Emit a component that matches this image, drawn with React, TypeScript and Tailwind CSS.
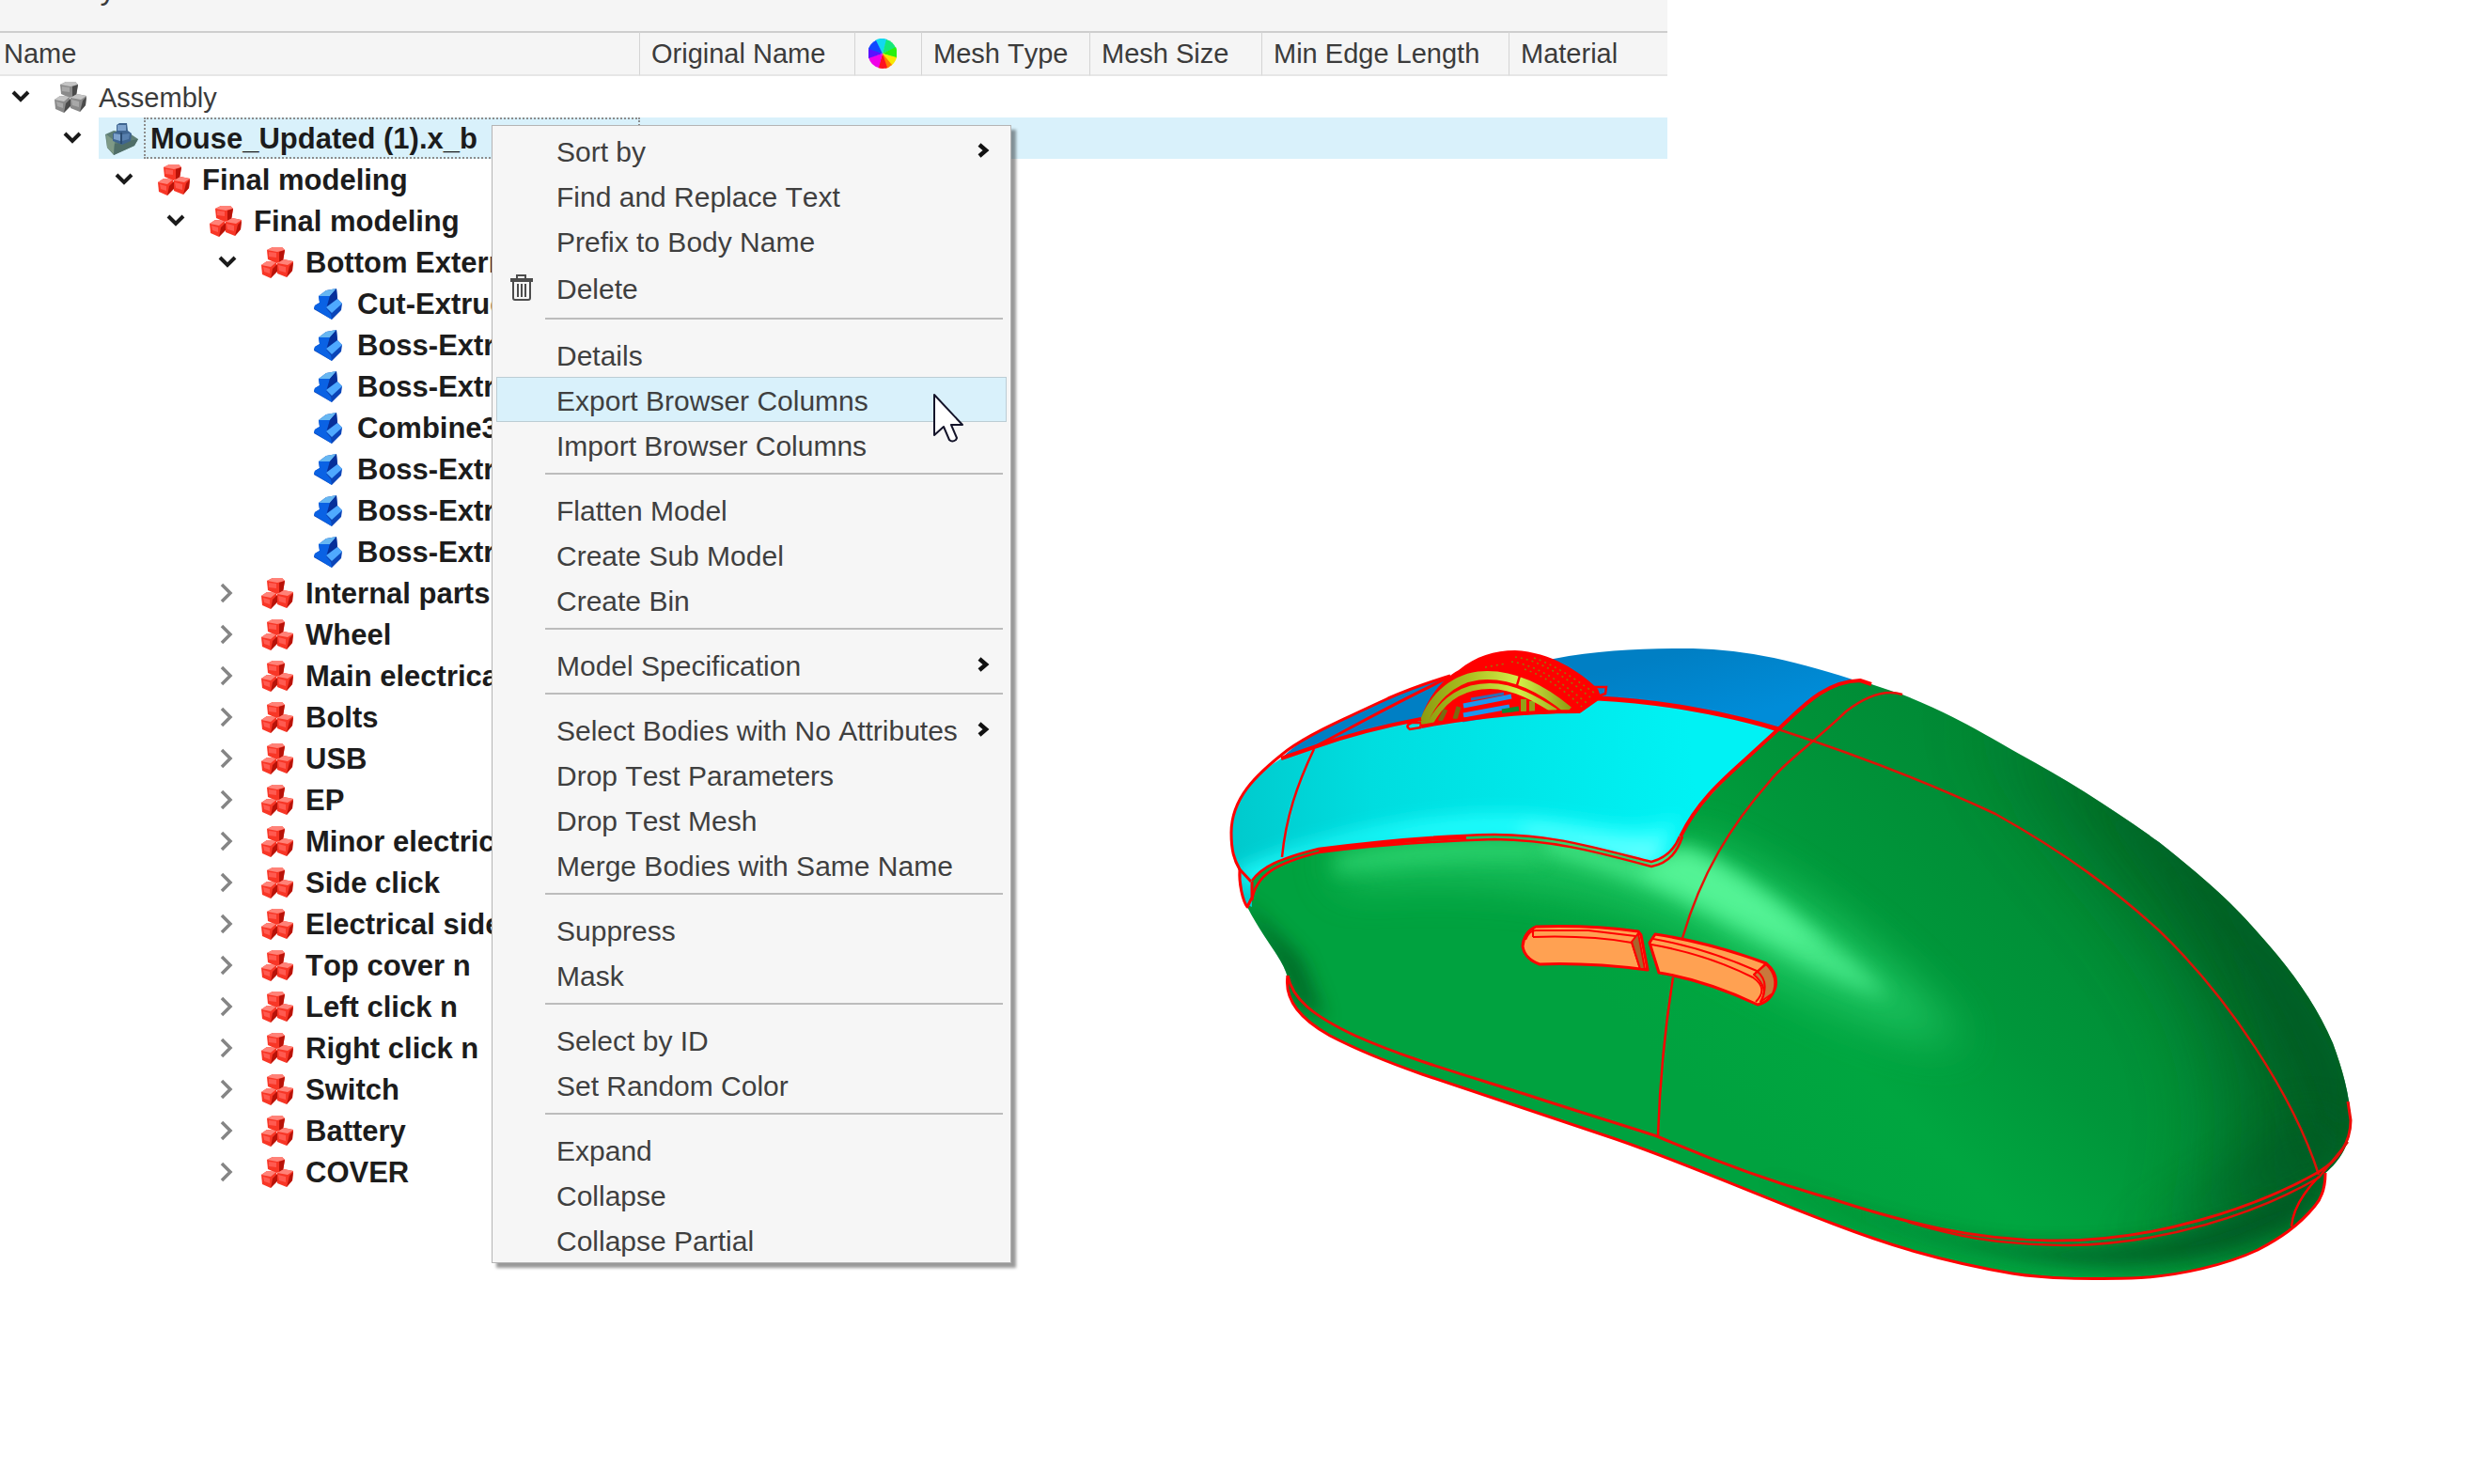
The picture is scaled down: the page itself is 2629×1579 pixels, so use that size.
import { useState } from "react";
import { clsx } from "clsx";

type IconKind = "assembly" | "model" | "group" | "part";

type TreeNode = {
  label: string;
  level: number;
  icon: IconKind;
  state: "open" | "closed" | "leaf";
};

type MenuItem = {
  label: string;
  submenu?: boolean;
  icon?: boolean;
};

const nodes: TreeNode[] = [
  { label: "Assembly", level: 0, icon: "assembly", state: "open" },
  { label: "Mouse_Updated (1).x_b", level: 1, icon: "model", state: "open" },
  { label: "Final modeling", level: 2, icon: "group", state: "open" },
  { label: "Final modeling", level: 3, icon: "group", state: "open" },
  { label: "Bottom External", level: 4, icon: "group", state: "open" },
  { label: "Cut-Extrude1", level: 5, icon: "part", state: "leaf" },
  { label: "Boss-Extrude1", level: 5, icon: "part", state: "leaf" },
  { label: "Boss-Extrude2", level: 5, icon: "part", state: "leaf" },
  { label: "Combine3", level: 5, icon: "part", state: "leaf" },
  { label: "Boss-Extrude3", level: 5, icon: "part", state: "leaf" },
  { label: "Boss-Extrude4", level: 5, icon: "part", state: "leaf" },
  { label: "Boss-Extrude5", level: 5, icon: "part", state: "leaf" },
  { label: "Internal parts", level: 4, icon: "group", state: "closed" },
  { label: "Wheel", level: 4, icon: "group", state: "closed" },
  { label: "Main electrical", level: 4, icon: "group", state: "closed" },
  { label: "Bolts", level: 4, icon: "group", state: "closed" },
  { label: "USB", level: 4, icon: "group", state: "closed" },
  { label: "EP", level: 4, icon: "group", state: "closed" },
  { label: "Minor electrical", level: 4, icon: "group", state: "closed" },
  { label: "Side click", level: 4, icon: "group", state: "closed" },
  { label: "Electrical side", level: 4, icon: "group", state: "closed" },
  { label: "Top cover n", level: 4, icon: "group", state: "closed" },
  { label: "Left click n", level: 4, icon: "group", state: "closed" },
  { label: "Right click n", level: 4, icon: "group", state: "closed" },
  { label: "Switch", level: 4, icon: "group", state: "closed" },
  { label: "Battery", level: 4, icon: "group", state: "closed" },
  { label: "COVER", level: 4, icon: "group", state: "closed" },
];

const indents = ["pl-0", "pl-[55px]", "pl-[110px]", "pl-[165px]", "pl-[220px]", "pl-[275px]"];

const menuGroups: MenuItem[][] = [
  [
    { label: "Sort by", submenu: true },
    { label: "Find and Replace Text" },
    { label: "Prefix to Body Name" },
    { label: "Delete", icon: true },
  ],
  [{ label: "Details" }, { label: "Export Browser Columns" }, { label: "Import Browser Columns" }],
  [{ label: "Flatten Model" }, { label: "Create Sub Model" }, { label: "Create Bin" }],
  [{ label: "Model Specification", submenu: true }],
  [
    { label: "Select Bodies with No Attributes", submenu: true },
    { label: "Drop Test Parameters" },
    { label: "Drop Test Mesh" },
    { label: "Merge Bodies with Same Name" },
  ],
  [{ label: "Suppress" }, { label: "Mask" }],
  [{ label: "Select by ID" }, { label: "Set Random Color" }],
  [{ label: "Expand" }, { label: "Collapse" }, { label: "Collapse Partial" }],
];

function CubesIcon({ gray }: { gray?: boolean }) {
  const [light, mid, main, dark] = gray
    ? ["#c4c4c4", "#a8a8a8", "#8a8a8a", "#4a4a4a"]
    : ["#ff8278", "#ff5a50", "#f83626", "#b81208"];

  return (
    <svg width="35" height="35" viewBox="0 0 35 35" aria-hidden="true">
      <path d="M7 4 L13 1 L23 1 L26 4 L24 16 L17 18 L8 14Z" fill={main} />
      <path d="M7 4 L13 1 L23 1 L26 4 L18 6Z" fill={light} />
      <path d="M26 4 L24 16 L20 18 L20 6Z" fill={dark} />
      <path d="M9 6 L17 7 L17 12 L9 11Z" fill={mid} />
      <path d="M1 20 L7 16 L17 17 L18 26 L11 34 L2 30Z" fill={main} />
      <path d="M1 20 L7 16 L17 17 L11 22Z" fill={light} />
      <path d="M18 19 L18 27 L11 34 L13 24Z" fill={dark} />
      <path d="M3 22 L10 24 L10 29 L4 27Z" fill={mid} />
      <path d="M18 18 L25 14 L35 16 L34 26 L28 33 L18 29Z" fill={main} />
      <path d="M18 18 L25 14 L35 16 L29 20Z" fill={light} />
      <path d="M35 17 L34 26 L28 33 L31 21Z" fill={dark} />
      <path d="M19 20 L27 22 L27 28 L20 26Z" fill={mid} />
    </svg>
  );
}

function PartIcon() {
  return (
    <svg width="31" height="34" viewBox="0 0 31 34" aria-hidden="true">
      <path d="M5 9 L13 3 L24 1 L25 12 L30 17 L29 24 L19 34 L0 23 L1 19 L6 16Z" fill="#0b45b8" />
      <path d="M5 9 L13 3 L24 1 L17 9Z" fill="#67b7f2" />
      <path d="M5 9 L17 9 L13 22 L18 28 L19 34 L0 22 L1 19 L6 16Z" fill="#0a62e4" />
      <path d="M17 9 L24 1 L25 12 L14 20Z" fill="#06309a" />
      <path d="M13 21 L25 12 L30 17 L19 27Z" fill="#4fa9ff" />
    </svg>
  );
}

function ModelIcon() {
  return (
    <svg width="35" height="35" viewBox="0 0 35 35" aria-hidden="true">
      <path d="M0 13 L9 9 L26 12 L35 18 L31 25 L9 35 L2 27Z" fill="#5f7f75" />
      <path d="M1 13 L10 20 L9 34 L2 27Z" fill="#7f9a86" />
      <path d="M10 23 L35 18 L31 25 L9 35Z" fill="#4f6e68" />
      <path d="M12 3 L15 1 L23 1 L24 9 L28 12 L27 20 L18 24 L8 20 L8 12 L12 10Z" fill="#3f6590" />
      <path d="M13 3 L22 3 L22 9 L13 9Z M9 12 L16 13 L16 20 L9 18Z" fill="#7da2cc" />
      <path d="M18 13 L26 12 L25 18 L18 20Z" fill="#5880ae" />
      <path d="M17 11 L17 23" stroke="#264668" strokeWidth="1.5" />
    </svg>
  );
}

function NodeIcon({ icon }: { icon: IconKind }) {
  if (icon === "part") return <PartIcon />;
  if (icon === "model") return <ModelIcon />;
  return <CubesIcon gray={icon === "assembly"} />;
}

function ColorWheel() {
  return (
    <svg width="30" height="32" viewBox="-15 -16 30 32" role="img" aria-label="Color">
      <g>
        <path d="M0 0 L-8 -14 A15 16 0 0 1 5 -15Z" fill="#12d8f0" />
        <path d="M0 0 L4 -15 A15 16 0 0 1 14 -6Z" fill="#14e878" />
        <path d="M0 0 L14 -7 A15 16 0 0 1 15 5Z" fill="#28f010" />
        <path d="M0 0 L15 4 A15 16 0 0 1 9 13Z" fill="#f8e800" />
        <path d="M0 0 L10 12 A15 16 0 0 1 3 16Z" fill="#ff7a00" />
        <path d="M0 0 L5 15 A15 16 0 0 1 -5 15Z" fill="#ff1020" />
        <path d="M0 0 L-4 15 A15 16 0 0 1 -15 4Z" fill="#f000e8" />
        <path d="M0 0 L-15 5 A15 16 0 0 1 -14 -7Z" fill="#5a10ff" />
        <path d="M0 0 L-15 -5 A15 16 0 0 1 -7 -14Z" fill="#1048ff" />
      </g>
    </svg>
  );
}

function TrashIcon() {
  return (
    <svg width="26" height="30" viewBox="0 0 26 30" fill="none" stroke="#4c4c4c" aria-hidden="true">
      <path d="M8 5 V2 H17 V5" strokeWidth="2" />
      <path d="M1 7 H25" strokeWidth="4" />
      <path d="M4 9 V26 Q4 28 6 28 H20 Q22 28 22 26 V9" strokeWidth="2" />
      <path d="M9 11 V25 M13 11 V25 M17 11 V25" strokeWidth="2" />
    </svg>
  );
}

function Expander({ state }: { state: TreeNode["state"] }) {
  if (state === "leaf") return <span className="w-[50px] shrink-0" />;
  return (
    <button
      type="button"
      aria-label={state === "open" ? "Collapse node" : "Expand node"}
      className="flex h-full w-[50px] shrink-0 items-center pl-3"
    >
      {state === "open" ? (
        <svg width="20" height="22" viewBox="0 0 20 22" fill="none" aria-hidden="true">
          <path d="M2 6 L10 14 L18 6" stroke="#1a1a1a" strokeWidth="4" />
        </svg>
      ) : (
        <svg width="20" height="22" viewBox="0 0 20 22" fill="none" aria-hidden="true">
          <path d="M4 2 L13 11 L4 20" stroke="#858585" strokeWidth="3.5" />
        </svg>
      )}
    </button>
  );
}

function BrowserTable() {
  const [selected] = useState(1);
  const headCell = "h-12 border-y-2 border-t-[#cecece] border-b-[#e6e6e6] bg-[#f5f5f5] p-0 text-left font-normal";

  return (
    <table className="w-full table-fixed border-separate border-spacing-0 text-[29px] text-[#3b3b3b]">
      <colgroup>
        <col className="w-[681px]" />
        <col className="w-[229px]" />
        <col className="w-[71px]" />
        <col className="w-[179px]" />
        <col className="w-[183px]" />
        <col className="w-[263px]" />
        <col />
      </colgroup>
      <thead>
        <tr className="whitespace-nowrap leading-10">
          <th className={clsx(headCell, "border-r border-r-[#d4d4d4] pl-1")}>Name</th>
          <th className={clsx(headCell, "border-r border-r-[#d4d4d4] pl-3")}>Original Name</th>
          <th className={clsx(headCell, "border-r border-r-[#d4d4d4] pl-3.5")}>
            <ColorWheel />
          </th>
          <th className={clsx(headCell, "border-r border-r-[#d4d4d4] pl-3")}>Mesh Type</th>
          <th className={clsx(headCell, "border-r border-r-[#d4d4d4] pl-3")}>Mesh Size</th>
          <th className={clsx(headCell, "border-r border-r-[#d4d4d4] pl-3")}>Min Edge Length</th>
          <th className={clsx(headCell, "pl-3")}>Material</th>
        </tr>
      </thead>
      <tbody>
        {nodes.map((node, index) => {
          const active = index === selected;
          return (
            <tr key={index} aria-selected={active}>
              <td className="p-0">
                <div className={clsx("flex h-11 items-center", indents[node.level])}>
                  <Expander state={node.state} />
                  <span
                    className={clsx(
                      "flex h-full w-12 shrink-0 items-center justify-center",
                      active && "bg-[#d9f1fb]",
                    )}
                  >
                    <NodeIcon icon={node.icon} />
                  </span>
                  <span
                    className={clsx(
                      "h-full flex-1 overflow-hidden border-2 border-dotted pl-[5px] leading-[42px] whitespace-nowrap",
                      active ? "border-[#8c8c8c] bg-[#d9f1fb]" : "border-transparent",
                      node.level > 0 && "text-[31px] font-bold text-[#1c1c1c]",
                    )}
                  >
                    {node.label}
                  </span>
                </div>
              </td>
              <td colSpan={6} className={clsx("p-0", active && "bg-[#d9f1fb]")} />
            </tr>
          );
        })}
      </tbody>
    </table>
  );
}

function ContextMenu() {
  const [highlighted, setHighlighted] = useState("Export Browser Columns");

  return (
    <div
      role="menu"
      className="absolute top-[133px] left-[523px] w-[553px] border border-[#b4b4b4] bg-[#f6f6f6] px-1 pt-0.5 text-[30px] text-[#3f3f3f] shadow-[5px_5px_3px_rgba(0,0,0,0.4)]"
    >
      {menuGroups.map((group, index) => (
        <div key={index} role="group">
          {index > 0 && <hr className="mt-1.5 mr-1 mb-[13px] ml-[52px] h-0.5 border-0 bg-[#bcbcbc]" />}
          {group.map((item) => (
            <button
              key={item.label}
              type="button"
              role="menuitem"
              onMouseEnter={() => setHighlighted(item.label)}
              className={clsx(
                "flex w-full items-center border pr-4 text-left whitespace-nowrap",
                item.icon ? "h-[52px]" : "h-12",
                item.label === highlighted ? "border-[#bccdd4] bg-[#d9f1fb]" : "border-transparent",
              )}
            >
              <span className="w-[63px] shrink-0 pl-[13px]">{item.icon && <TrashIcon />}</span>
              <span className="flex-1 pt-0.5">{item.label}</span>
              {item.submenu && (
                <svg width="14" height="16" viewBox="0 0 14 16" fill="none" aria-hidden="true">
                  <path d="M2 2 L9 8 L2 14" stroke="#111" strokeWidth="4.5" />
                </svg>
              )}
            </button>
          ))}
        </div>
      ))}
    </div>
  );
}

function Cursor() {
  return (
    <svg
      className="pointer-events-none absolute top-[417px] left-[992px]"
      width="36"
      height="56"
      viewBox="0 0 36 56"
      aria-hidden="true"
    >
      <path
        d="M2 3 L2 46 L12 37 L18 51 Q21 54 25 51 L26 49 L20 35 L32 35 Z"
        fill="#fff"
        stroke="#14142a"
        strokeWidth="2"
        strokeLinejoin="round"
      />
    </svg>
  );
}

const bodyPath =
  "M1327 965 L1332 937 C1343 922 1360 915 1403 903 C1457 896 1523 889 1590 888 C1650 888 1690 900 1757 918 C1775 912 1783 900 1790 885 C1805 855 1830 830 1857 808 L1892 776 C1915 755 1940 728 1979 724 L1991 728 L2024 739 C2068 756 2103 776 2148 802 C2198 829 2247 860 2297 896 C2347 936 2375 960 2409 1000 C2440 1035 2465 1070 2482 1110 C2492 1137 2500 1165 2501 1192 C2502 1215 2490 1235 2474 1248 C2474 1262 2470 1275 2463 1283 C2445 1305 2425 1318 2402 1330 C2370 1345 2320 1358 2268 1360 C2220 1361 2180 1361 2141 1355 C2065 1342 2010 1325 1950 1302 C1870 1272 1800 1240 1719 1212 L1513 1143 C1470 1128 1440 1115 1415 1102 C1385 1085 1366 1065 1370 1040 C1365 1020 1345 1000 1327 965Z";

const cyanPath =
  "M1310 885 C1310 850 1335 825 1363 807 L1398 795 C1457 777 1507 765 1540 760 L1680 757 L1700 743 C1760 746 1830 757 1892 776 L1857 808 C1830 835 1805 860 1790 885 C1783 900 1775 912 1757 918 C1690 900 1650 888 1590 888 C1523 889 1457 896 1403 903 C1360 915 1343 922 1332 937 L1332 965 L1325 962 C1318 945 1318 935 1318 926 C1310 912 1310 900 1310 885Z";

function MouseModel() {
  return (
    <svg className="block h-auto w-full" viewBox="1290 660 1339 730" role="img" aria-label="Mouse assembly model">
      <defs>
        <clipPath id="body-clip">
          <path d={bodyPath} />
        </clipPath>
        <clipPath id="cyan-clip">
          <path d={cyanPath} />
        </clipPath>
        <linearGradient id="body-fill" gradientUnits="userSpaceOnUse" x1="1840" y1="1200" x2="2180" y2="860">
          <stop offset="0" stopColor="#00a23f" />
          <stop offset="0.3" stopColor="#00a640" />
          <stop offset="0.6" stopColor="#00963a" />
          <stop offset="1" stopColor="#008a35" />
        </linearGradient>
        <linearGradient id="cyan-fill" gradientUnits="userSpaceOnUse" x1="1310" y1="840" x2="1800" y2="800">
          <stop offset="0" stopColor="#00cacd" />
          <stop offset="0.3" stopColor="#00dddf" />
          <stop offset="1" stopColor="#00f2f4" />
        </linearGradient>
        <linearGradient id="blue-fill" gradientUnits="userSpaceOnUse" x1="1800" y1="690" x2="1820" y2="770">
          <stop offset="0" stopColor="#007fc4" />
          <stop offset="1" stopColor="#008cd8" />
        </linearGradient>
        <linearGradient id="arch-fill" gradientUnits="userSpaceOnUse" x1="1510" y1="770" x2="1670" y2="755">
          <stop offset="0" stopColor="#8a9a10" />
          <stop offset="0.35" stopColor="#aabf20" />
          <stop offset="0.68" stopColor="#d4ee48" />
          <stop offset="1" stopColor="#8f9f14" />
        </linearGradient>
        <filter id="soft" x="-50%" y="-50%" width="200%" height="200%">
          <feGaussianBlur stdDeviation="24" />
        </filter>
        <filter id="softer" x="-50%" y="-50%" width="200%" height="200%">
          <feGaussianBlur stdDeviation="45" />
        </filter>
        <filter id="tight" x="-50%" y="-50%" width="200%" height="200%">
          <feGaussianBlur stdDeviation="10" />
        </filter>
      </defs>

      {/* top shells */}
      <path
        d="M1363 807 C1390 780 1427 766 1477 743 C1520 724 1545 716 1570 716 L1653 701 C1700 692 1743 690 1790 690 C1850 690 1900 700 1971 723 L1892 776 C1830 757 1760 746 1700 743 L1540 762 L1398 795Z"
        fill="url(#blue-fill)"
      />

      {/* body */}
      <path d={bodyPath} fill="url(#body-fill)" />
      <g clipPath="url(#body-clip)">
        <path
          d="M2120 740 C2300 840 2450 960 2540 1120 L2530 1300 L2330 1330 C2400 1230 2380 1100 2290 980 C2240 910 2180 860 2120 740Z"
          fill="#005a22"
          opacity="0.75"
          filter="url(#softer)"
        />
        <path
          d="M2200 790 C2320 860 2460 1010 2520 1190 L2480 1250 C2460 1110 2350 950 2200 790Z"
          fill="#005420"
          opacity="0.7"
          filter="url(#soft)"
        />
        <path
          d="M2440 1190 L2500 1200 L2460 1260 L2250 1325 C2330 1280 2400 1240 2440 1190Z"
          fill="#005020"
          opacity="0.4"
          filter="url(#soft)"
        />
        <path
          d="M1420 905 C1500 880 1640 880 1740 915 L1800 895 C1880 920 2000 1000 2090 1110 C2020 1110 1890 1050 1790 985 C1700 940 1560 925 1430 940Z"
          fill="#2fd873"
          opacity="0.65"
          filter="url(#soft)"
        />
        <path
          d="M1640 885 C1700 895 1740 915 1760 915 L1790 900 C1860 925 1950 1000 2010 1060 C1940 1045 1850 990 1780 955 C1740 938 1690 920 1640 908Z"
          fill="#55f596"
          opacity="0.7"
          filter="url(#tight)"
        />
        <path
          d="M1750 915 L1795 905 C1850 930 1900 975 1940 1010 C1890 1000 1830 965 1750 930Z"
          fill="#64ffa4"
          opacity="0.55"
          filter="url(#tight)"
        />
        <path
          d="M1420 910 C1500 896 1570 888 1640 892 L1640 915 C1560 912 1490 918 1420 930Z"
          fill="#38e07c"
          opacity="0.6"
          filter="url(#tight)"
        />
        <path d="M1320 955 L1365 1040 L1378 1070 L1410 1085 L1385 1020Z" fill="#005a22" opacity="0.75" filter="url(#tight)" />
        <path
          d="M1870 1250 C1990 1300 2100 1330 2200 1326 C2320 1326 2400 1290 2472 1252 L2440 1300 C2360 1345 2280 1352 2200 1345 C2080 1330 1980 1300 1870 1250Z"
          fill="#005020"
          opacity="0.7"
          filter="url(#tight)"
        />
      </g>

      {/* left button */}
      <path d={cyanPath} fill="url(#cyan-fill)" />
      <g clipPath="url(#cyan-clip)">
        <path
          d="M1310 930 C1420 880 1560 860 1640 870 C1700 875 1740 890 1790 870 L1760 930 C1690 905 1620 885 1560 892 C1450 895 1380 905 1335 945Z"
          fill="#20ffff"
          filter="url(#tight)"
        />
        <path d="M1620 880 C1690 885 1740 905 1775 890 L1757 920 C1700 905 1660 895 1620 890Z" fill="#6affff" filter="url(#tight)" />
      </g>

      {/* wheel */}
      <path
        d="M1510 773 C1515 745 1535 722 1552 713 C1570 698 1590 692 1612 692 C1650 694 1680 714 1700 733 L1703 741 L1682 758 L1600 761Z"
        fill="#ff0000"
      />
      <path d="M1557 751 L1608 741 M1557 761 L1606 752" stroke="#1c96f0" strokeWidth="5" fill="none" />
      <path d="M1565 744 L1600 738 M1556 767 L1580 763" stroke="#2c6cb8" strokeWidth="3" fill="none" />
      <path d="M1598 757 L1616 754" stroke="#0c8a30" strokeWidth="5" />
      <path d="M1621 744 L1621 757 M1630 746 L1630 757" stroke="#93a018" strokeWidth="6" />
      <path d="M1532 767 L1538 755 M1548 765 L1552 752" stroke="#7a6a10" strokeWidth="5" />
      <path
        d="M1514 771 C1522 746 1543 723 1573 719 C1612 715 1645 736 1669 756"
        fill="none"
        stroke="url(#arch-fill)"
        strokeWidth="9"
      />
      <path
        d="M1521 771 C1535 743 1558 730 1585 730 C1612 730 1636 745 1655 757"
        fill="none"
        stroke="url(#arch-fill)"
        strokeWidth="6"
      />
      <path d="M1617 719 L1614 729" stroke="#ff0000" strokeWidth="2.5" />
      <g fill="none" stroke="#9a7408" strokeWidth="1.6" strokeDasharray="2 4">
        <path d="M1612 699 C1640 703 1668 722 1692 742" />
        <path d="M1608 704 C1635 708 1662 726 1688 748" />
        <path d="M1622 712 C1645 720 1665 735 1683 752" />
        <path d="M1632 700 C1655 708 1675 722 1696 737" />
        <path d="M1580 710 L1602 706" />
      </g>
      <g fill="none" stroke="#ff0000" strokeWidth="2.5">
        <path d="M1512 769 L1502 769 Q1494 772 1500 776 L1512 774" />
        <path d="M1695 731 L1709 731 L1708 738 L1700 741" />
      </g>

      {/* side buttons */}
      <g stroke="#ff0000" strokeLinejoin="round">
        <path
          d="M1620 1007 Q1621 992 1634 986 Q1690 984 1743 991 L1746 995 L1753 1032 Q1690 1024 1638 1026 Q1622 1020 1620 1007Z"
          fill="#ffa152"
          strokeWidth="3"
        />
        <path d="M1623 1000 Q1627 990 1634 990 L1690 990 L1740 996" fill="none" strokeWidth="2" />
        <path d="M1631 997 Q1690 995 1736 1003 L1745 1031 M1631 988 L1631 997" fill="none" strokeWidth="2" />
        <path d="M1736 1002 L1743 993 L1750 1031 L1745 1031Z" fill="#a8642c" strokeWidth="2" />
        <path
          d="M1761 994 Q1820 1003 1879 1025 Q1892 1036 1889 1050 Q1884 1066 1870 1069 Q1815 1043 1765 1035 L1755 1003Z"
          fill="#ffa152"
          strokeWidth="3"
        />
        <path d="M1879 1026 Q1893 1040 1886 1057 L1873 1066 Q1883 1052 1866 1037Z" fill="#c8783c" strokeWidth="2" />
        <path d="M1759 999 Q1815 1009 1869 1033 Q1884 1045 1873 1066" fill="none" strokeWidth="2" />
        <path d="M1757 1005 Q1815 1015 1865 1040 Q1882 1052 1868 1066 M1866 1037 L1879 1025" fill="none" strokeWidth="2" />
      </g>

      {/* feature edges */}
      <g fill="none" stroke="#ff0000" strokeWidth="3" strokeLinejoin="round">
        <path d="M1543 719 C1520 726 1500 733 1477 743 C1430 765 1395 780 1370 798 C1335 825 1310 850 1310 886 C1310 905 1313 915 1319 925 L1331 938" />
        <path d="M1319 925 C1318 940 1322 958 1327 965 L1332 955 L1332 938" />
        <path d="M1363 807 L1398 795 C1440 780 1480 771 1512 765" strokeWidth="4" />
        <path d="M1398 795 C1440 773 1480 750 1543 720" />
        <path d="M1398 797 C1380 835 1368 870 1364 912" strokeWidth="2.5" />
        <path d="M1512 773 C1560 764 1620 757 1680 757 L1700 743" strokeWidth="4" />
        <path d="M1700 743 C1760 746 1830 757 1892 776" strokeWidth="5" />
        <path d="M1892 776 C1975 803 2050 832 2123 866 C2198 908 2250 947 2297 990 C2370 1060 2440 1165 2467 1250" stroke="#dc1408" strokeWidth="2.5" />
        <path d="M1332 937 C1343 922 1360 914 1403 903 C1457 896 1523 889 1590 888 C1650 888 1690 900 1757 917 C1775 912 1783 900 1787 890" strokeWidth="2.5" />
        <path d="M1332 958 C1336 930 1360 918 1403 907 C1457 900 1523 895 1590 893 C1650 894 1690 904 1757 922 C1777 918 1785 905 1790 890" strokeWidth="2.5" />
        <path d="M1403 905 C1457 898 1523 892 1560 891" strokeWidth="4" />
        <path d="M1788 890 C1805 855 1830 832 1857 808 L1892 776 C1915 755 1940 725 1979 724 L1991 728" strokeWidth="4" />
        <path d="M2024 739 C2005 733 1985 741 1964 757 C1930 790 1900 810 1884 830 C1840 880 1810 930 1790 998" stroke="#e81008" strokeWidth="2.5" />
        <path d="M1780 1040 C1772 1090 1766 1150 1764 1208" strokeWidth="2.5" />
        <path d="M1370 1038 C1375 1062 1395 1080 1442 1102 C1500 1128 1570 1147 1625 1165 C1680 1183 1720 1195 1763 1209 C1830 1238 1900 1262 1950 1276 C2030 1302 2100 1319 2180 1320 C2290 1322 2400 1285 2467 1247 C2485 1236 2501 1218 2501 1192 L2498 1172" stroke="#ee0c06" />
        <path d="M2030 1300 C2080 1315 2120 1324 2200 1325 C2300 1324 2400 1292 2467 1253 L2498 1215" stroke="#e01008" strokeWidth="2.5" />
        <path d="M2467 1252 Q2440 1280 2438 1305" strokeWidth="2.5" />
        <path d="M1370 1038 C1366 1065 1385 1085 1415 1102 C1440 1115 1470 1128 1513 1143 L1719 1212 C1800 1240 1870 1272 1950 1302 C2010 1325 2065 1342 2141 1355 C2180 1361 2220 1361 2268 1360 C2320 1358 2370 1345 2402 1330 C2425 1318 2445 1305 2463 1283 C2470 1275 2474 1262 2474 1248" />
      </g>
    </svg>
  );
}

export default function App() {
  return (
    <main className="relative grid min-h-screen grid-cols-[minmax(0,1290fr)_minmax(0,484fr)_minmax(0,855fr)] items-start bg-white font-['Liberation_Sans',Arial,sans-serif] [font-kerning:none]">
      <section className="col-span-2 col-start-1 row-start-1">
        <header className="h-[33px] overflow-hidden bg-[#f5f5f5]">
          <h1 className="-mt-[30px] -ml-5 text-[33px] leading-9 text-[#3b3b3b]">Assembly Browser</h1>
        </header>
        <BrowserTable />
      </section>
      <section className="pointer-events-none col-span-2 col-start-2 row-start-1 pt-[660px]">
        <MouseModel />
      </section>
      <ContextMenu />
      <Cursor />
    </main>
  );
}
